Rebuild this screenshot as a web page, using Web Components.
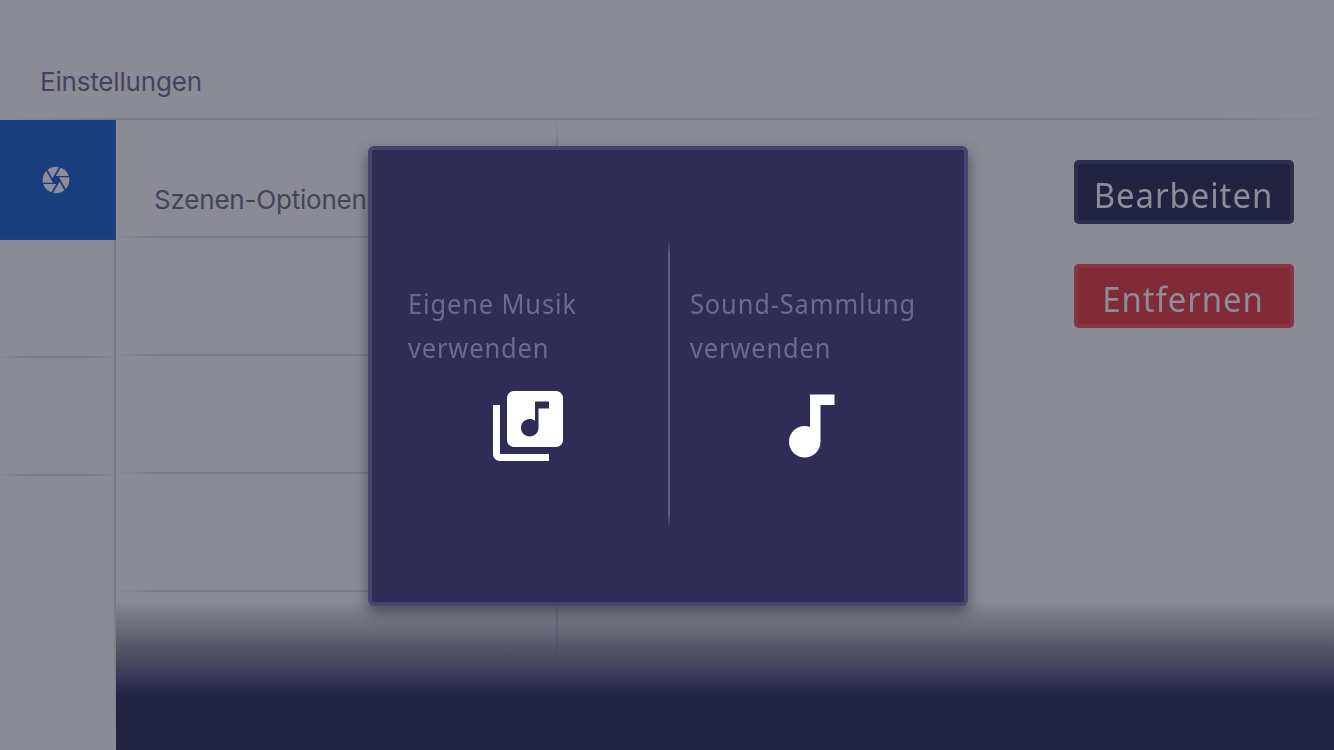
<!DOCTYPE html>
<html lang="de">
<head>
<meta charset="utf-8">
<title>Einstellungen</title>
<style>
html,body{margin:0;height:100%;overflow:hidden;background:#8b8b96}
</style>
</head>
<body>
<settings-screen></settings-screen>
<script>
const define = (name, html) => customElements.define(name, class extends HTMLElement {
  constructor() {
    super();
    const t = document.createElement('template');
    t.innerHTML = html;
    this.attachShadow({mode: 'open'}).append(t.content.cloneNode(true));
  }
});

define('app-header', `<style>
:host{display:flex;align-items:flex-start;box-sizing:border-box;height:120px;padding:65px 40px 0;font:26px/34px Inter,sans-serif;color:#43435f;border-bottom:2px solid;border-image:linear-gradient(90deg,#7b7a8c00,#7b7a8c 9%,#7b7a8c 91%,#7b7a8c00) 2}
span{letter-spacing:-.18px}
</style><span><slot></slot></span>`);

define('side-tab', `<style>
:host{display:flex;box-sizing:border-box;height:118px;border-bottom:2px solid;border-image:linear-gradient(90deg,#7b7a8c00,#7b7a8c 25%,#7b7a8c 75%,#7b7a8c00) 2}
:host([active]){height:120px;padding-left:40px;align-items:center;background:#183e7d;border:0;box-shadow:inset -2px -2px #243f76}
:host([last]){border-image:none;border-color:transparent}
svg{width:32px;height:32px;fill:#8e8d98}
:host(:not([active])) svg{display:none}
</style><svg viewBox="0 0 24 24"><path d="M9.4 10.5l4.77-8.26C13.47 2.09 12.75 2 12 2c-2.4 0-4.6.85-6.32 2.25l3.66 6.35.06-.1zM21.54 9c-.92-2.92-3.15-5.26-6-6.34L11.88 9h9.66zm.26 1h-7.49l.29.5 4.76 8.25C21 16.97 22 14.61 22 12c0-.69-.07-1.35-.2-2zM8.54 12l-3.9-6.75C3.01 7.03 2 9.39 2 12c0 .69.07 1.35.2 2h7.49l-1.15-2zm-6.08 3c.92 2.92 3.15 5.26 6 6.34L12.12 15H2.46zm11.27 0l-3.9 6.76c.7.15 1.42.24 2.17.24 2.4 0 4.6-.85 6.32-2.25l-3.66-6.35-.93 1.6z"/></svg>`);

define('option-row', `<style>
:host{display:block;box-sizing:border-box;height:118px;padding:63px 0 0 38px;font:26px/34px Inter,sans-serif;color:#43435f;white-space:nowrap;border-bottom:2px solid;border-image:linear-gradient(90deg,#7b7a8c00,#7b7a8c 10%,#7b7a8c 90%,#7b7a8c00) 2}
span{letter-spacing:-.2px}
</style><span><slot></slot></span>`);

define('action-button', `<style>
:host{display:flex;justify-content:center;align-items:center;box-sizing:border-box;width:220px;height:64px;padding:6px 2px 0 0;background:var(--fill);border:4px solid var(--edge);border-radius:5px;font:35px/48px "Noto Sans",sans-serif;color:#8d8c98;white-space:nowrap}
span{letter-spacing:1px;transform:scaleX(.94)}
</style><span><slot></slot></span>`);

define('choice-card', `<style>
:host{display:flex;flex-direction:column;font:27px/44px "Noto Sans",sans-serif;color:#6c6a90;white-space:nowrap}
.label{display:flex;flex-direction:column;height:88px;transform:scaleX(.94);transform-origin:0 0}
::slotted(span){letter-spacing:.95px}
svg{display:block;width:84px;height:84px;fill:#fff;margin:14px 0 0 78px}
.note,:host([kind=note]) .library{display:none}
:host([kind=note]) .note{display:block}
</style><div class="label"><slot></slot></div>
<svg class="library" viewBox="0 0 24 24"><path d="M20 2H8c-1.1 0-2 .9-2 2v12c0 1.1.9 2 2 2h12c1.1 0 2-.9 2-2V4c0-1.1-.9-2-2-2zm-2 5h-3v5.5c0 1.38-1.12 2.5-2.5 2.5S10 13.88 10 12.5s1.12-2.5 2.5-2.5c.57 0 1.08.19 1.5.51V5h4v2zM4 6H2v14c0 1.1.9 2 2 2h14v-2H4V6z"/></svg>
<svg class="note" viewBox="0 0 24 24"><path d="M12 3v9.26c-.5-.17-1-.26-1.5-.26C8 12 6 14 6 16.5S8 21 10.5 21s4.5-2 4.5-4.5V6h4V3h-7z"/></svg>`);

define('choice-dialog', `<style>
:host{display:grid;grid-template-columns:260px 2px 1fr;column-gap:20px;box-sizing:border-box;width:600px;height:460px;padding:0 0 0 16px;background:#2f2d56;border:4px solid #444371;border-radius:6px;box-shadow:0 6px 14px #25243a99}
::slotted(choice-card){margin-top:132px}
i{margin:90px 0 74px;background:#605e87;-webkit-mask:linear-gradient(transparent,#000 14px,#000 calc(100% - 14px),transparent)}
</style><slot name="own"></slot><i></i><slot name="collection"></slot>`);

define('settings-screen', `<style>
:host{display:grid;grid-template-rows:120px 1fr;position:relative;width:1334px;height:750px;overflow:hidden;background:#8b8b96}
main{display:grid;grid-template-columns:116px 442px 1fr;min-height:0}
nav{background:linear-gradient(#7b7a8c,#7b7a8c 78%,#7b7a8c00) right/2px 100% no-repeat}
.options{position:relative;z-index:1;background:linear-gradient(#43436e00,#43436e44 5%,#43436e44 85%,#43436e00 91%) right/2px 100% no-repeat}
.actions{display:flex;flex-direction:column;align-items:flex-end;gap:40px;padding:40px 40px 0}
.fade{position:absolute;left:116px;right:0;top:602px;bottom:0;background:linear-gradient(#8b8b96 0,#7c7d89 9px,#6e7080 22px,#626274 34px,#535368 48px,#47465b 62px,#3f3f5b 69px,#333354 78px,#282848 88px,#222241 97px,#222241)}
choice-dialog{position:absolute;z-index:2;left:368px;top:146px}
</style>
<app-header>Einstellungen</app-header>
<main>
<nav><side-tab active></side-tab><side-tab></side-tab><side-tab></side-tab><side-tab last></side-tab></nav>
<section class="options"><option-row>Szenen-Optionen</option-row><option-row></option-row><option-row></option-row><option-row></option-row></section>
<section class="actions">
<action-button style="--fill:#222241;--edge:#2d2d4d">Bearbeiten</action-button>
<action-button style="--fill:#812b37;--edge:#863440">Entfernen</action-button>
</section>
</main>
<div class="fade"></div>
<choice-dialog>
<choice-card slot="own" kind="library" style="padding-left:20px"><span>Eigene Musik</span><span>verwenden</span></choice-card>
<choice-card slot="collection" kind="note"><span>Sound-Sammlung</span><span>verwenden</span></choice-card>
</choice-dialog>`);
</script>
</body>
</html>
